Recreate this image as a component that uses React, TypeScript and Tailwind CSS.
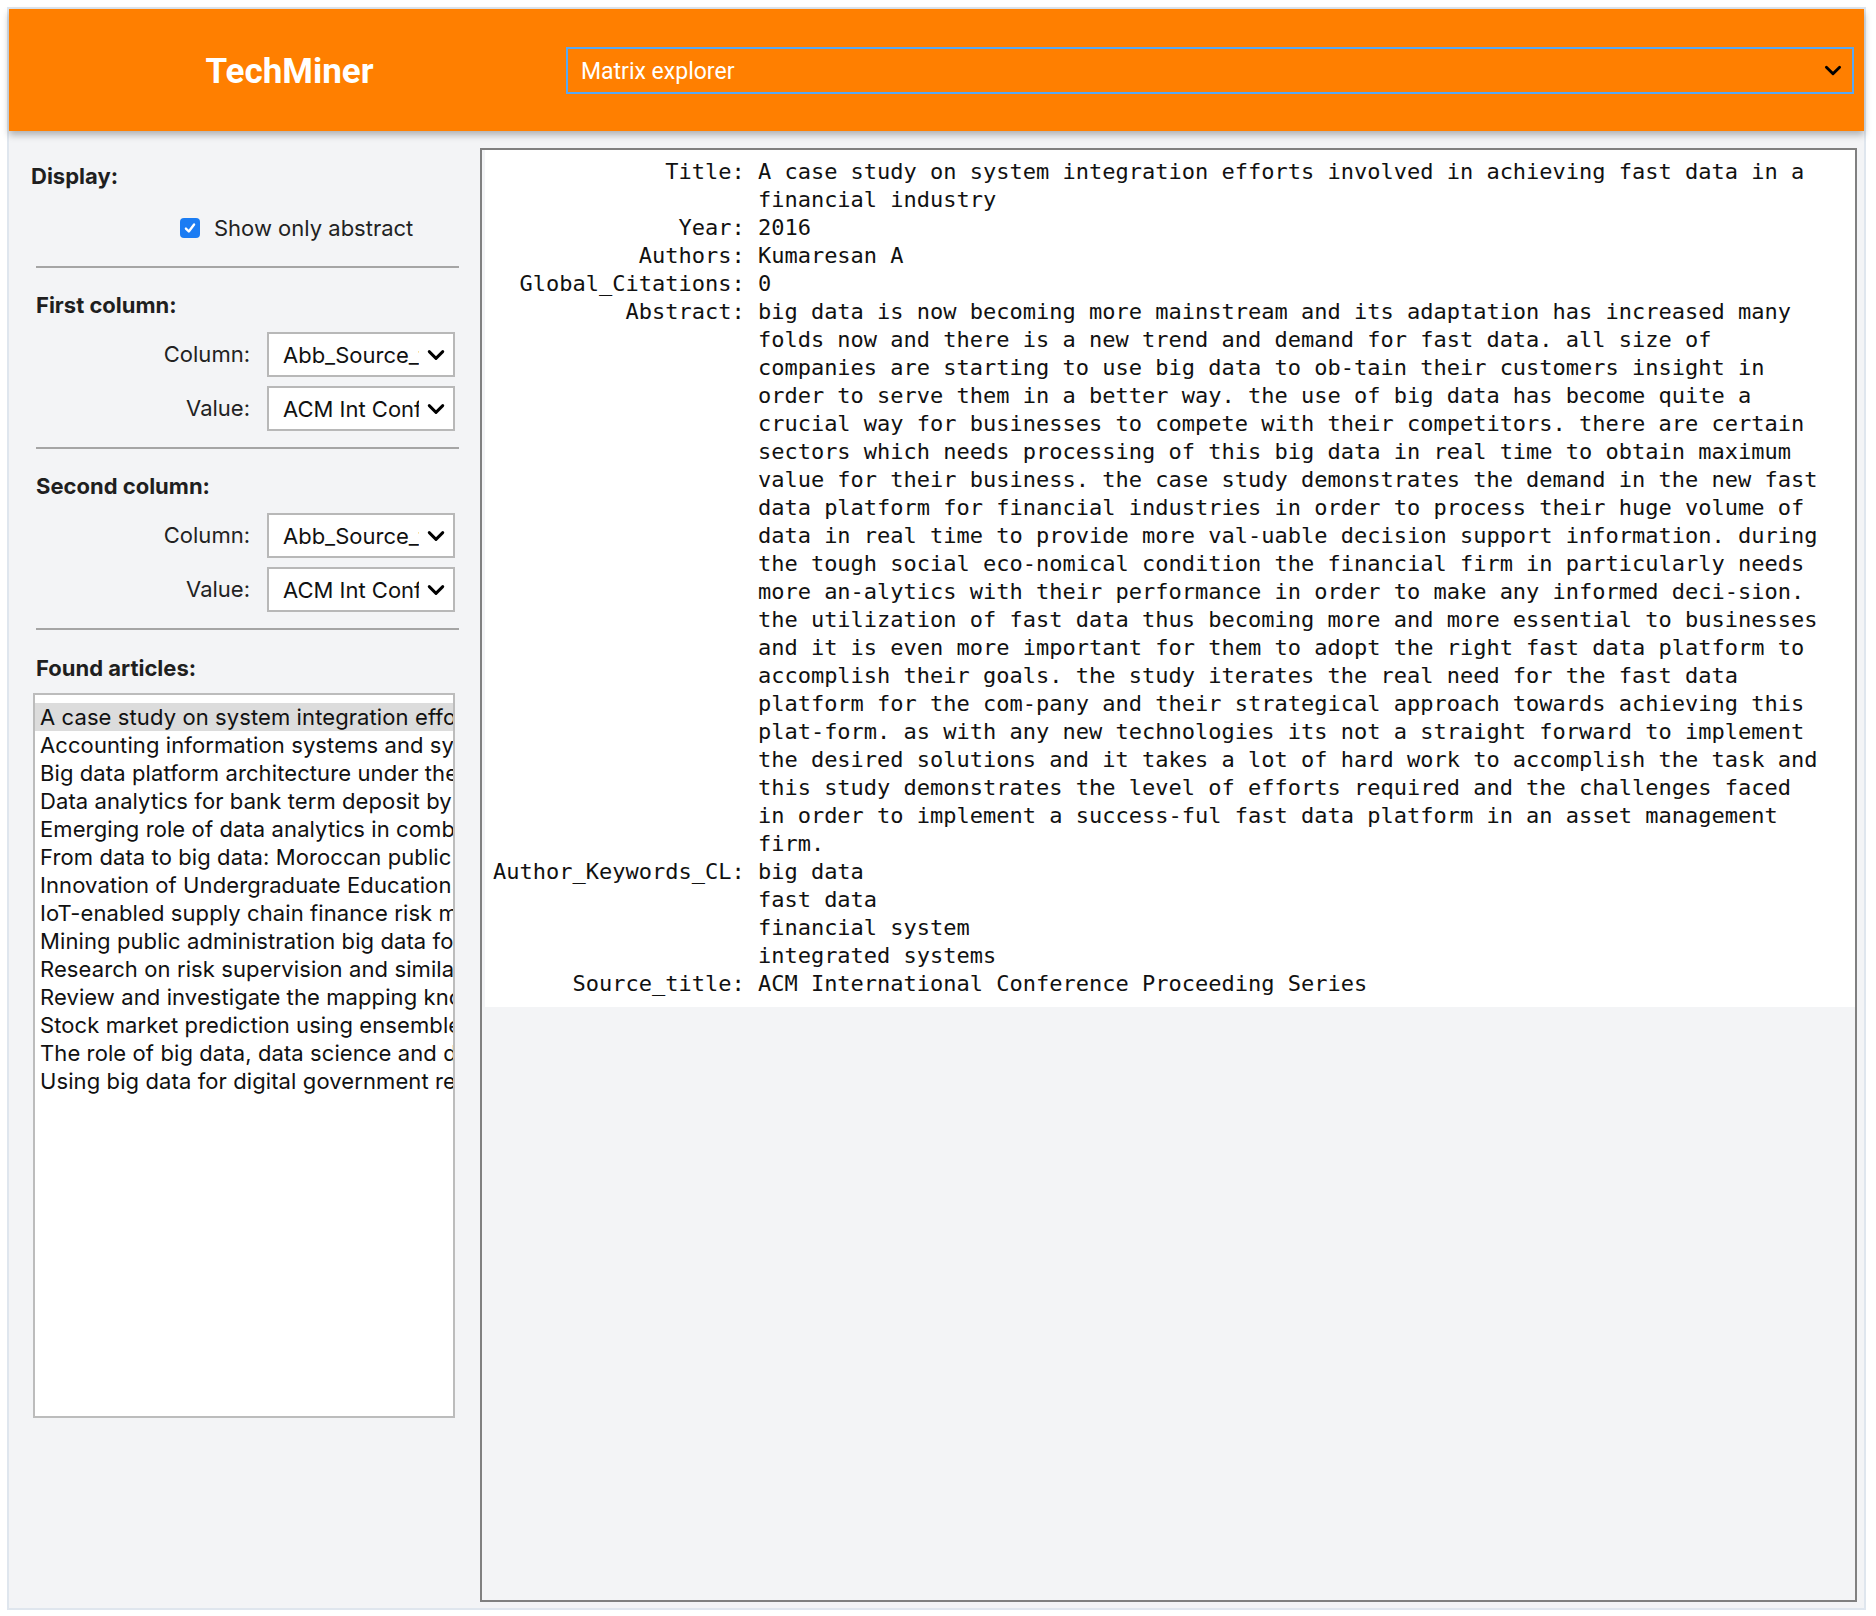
import React from 'react';

const articles = [
  'A case study on system integration efforts involved in achieving fast data in a financial industry',
  'Accounting information systems and systems thinking',
  'Big data platform architecture under the background of financial technology',
  'Data analytics for bank term deposit by using machine learning',
  'Emerging role of data analytics in combating financial crime',
  'From data to big data: Moroccan public sector',
  'Innovation of Undergraduate Education in Finance',
  'IoT-enabled supply chain finance risk management',
  'Mining public administration big data for financial risk',
  'Research on risk supervision and similarity analysis',
  'Review and investigate the mapping knowledge domain',
  'Stock market prediction using ensemble learning',
  'The role of big data, data science and data analytics',
  'Using big data for digital government research',
];

const record: [string, string[]][] = [
  ['Title:', ['A case study on system integration efforts involved in achieving fast data in a', 'financial industry']],
  ['Year:', ['2016']],
  ['Authors:', ['Kumaresan A']],
  ['Global_Citations:', ['0']],
  [
    'Abstract:',
    [
      'big data is now becoming more mainstream and its adaptation has increased many',
      'folds now and there is a new trend and demand for fast data. all size of',
      'companies are starting to use big data to ob-tain their customers insight in',
      'order to serve them in a better way. the use of big data has become quite a',
      'crucial way for businesses to compete with their competitors. there are certain',
      'sectors which needs processing of this big data in real time to obtain maximum',
      'value for their business. the case study demonstrates the demand in the new fast',
      'data platform for financial industries in order to process their huge volume of',
      'data in real time to provide more val-uable decision support information. during',
      'the tough social eco-nomical condition the financial firm in particularly needs',
      'more an-alytics with their performance in order to make any informed deci-sion.',
      'the utilization of fast data thus becoming more and more essential to businesses',
      'and it is even more important for them to adopt the right fast data platform to',
      'accomplish their goals. the study iterates the real need for the fast data',
      'platform for the com-pany and their strategical approach towards achieving this',
      'plat-form. as with any new technologies its not a straight forward to implement',
      'the desired solutions and it takes a lot of hard work to accomplish the task and',
      'this study demonstrates the level of efforts required and the challenges faced',
      'in order to implement a success-ful fast data platform in an asset management',
      'firm.',
    ],
  ],
  ['Author_Keywords_CL:', ['big data', 'fast data', 'financial system', 'integrated systems']],
  ['Source_title:', ['ACM International Conference Proceeding Series']],
];

const recordText = record
  .flatMap(([label, lines]) =>
    lines.map((line, i) => (i === 0 ? label.padStart(19) : ''.padStart(19)) + ' ' + line)
  )
  .join('\n');

function Chevron({ className = '' }: { className?: string }) {
  return (
    <svg viewBox="0 0 16 10" className={className} fill="none" stroke="currentColor" strokeWidth="2.6" strokeLinecap="round" strokeLinejoin="round">
      <polyline points="2,2 8,8 14,2" />
    </svg>
  );
}

function Select({ value }: { value: string }) {
  return (
    <div className="flex h-[45px] w-[188px] items-center border-2 border-[#b8b8b8] bg-white pl-[14px] pr-[8px]">
      <span className="w-[136px] overflow-hidden whitespace-nowrap text-[22px] leading-[26px] text-[#111]">{value}</span>
      <Chevron className="ml-[8px] h-[12px] w-[18px] text-black" />
    </div>
  );
}

function FieldRow({ label, value, className = '' }: { label: string; value: string; className?: string }) {
  return (
    <div className={`flex items-center ${className}`}>
      <span className="w-[241px] text-right text-[22px] text-[#222]">{label}</span>
      <div className="ml-[17px]">
        <Select value={value} />
      </div>
    </div>
  );
}

function Divider({ className = '' }: { className?: string }) {
  return <div className={`ml-[27px] h-[2px] w-[423px] bg-[#a5a5a5] ${className}`} />;
}

export default function App() {
  return (
    <div className="h-[1616px] w-[1876px] bg-white pl-[7px] pt-[7px] font-['Inter',sans-serif]">
      <div className="flex h-[1603px] w-[1859px] flex-col border-2 border-[#dfe6ee] bg-[#f3f4f6]">
        {/* Header */}
        <div className="relative z-10 flex h-[122px] shrink-0 items-center bg-[#ff7f00] shadow-[0_4px_7px_rgba(0,0,0,0.28)]">
          <div className="w-[557px] pl-[4px] pt-[4px] text-center font-['Roboto',sans-serif] text-[35px] font-bold text-white">TechMiner</div>
          <div className="flex h-[47px] w-[1288px] items-center justify-between border-2 border-[#58a8f2] pl-[13px] pr-[10px] font-['Roboto',sans-serif] text-[23px] text-white">
            <span className="pt-[4px]">Matrix explorer</span>
            <Chevron className="h-[11px] w-[18px] text-black" />
          </div>
        </div>

        <div className="flex flex-1">
          {/* Sidebar */}
          <div className="w-[471px] shrink-0 pt-[32px]">
            <div className="pl-[22px] text-[22px] font-bold leading-[26px] text-[#1f1f1f]">Display:</div>
            <div className="mt-[26px] flex h-[26px] items-center pl-[171px]">
              <div className="flex h-[20px] w-[20px] items-center justify-center rounded-[4px] bg-[#1b7cf3]">
                <svg viewBox="0 0 12 12" className="h-[14px] w-[14px]" fill="none" stroke="white" strokeWidth="2" strokeLinecap="round" strokeLinejoin="round">
                  <polyline points="2.5,6.5 5,9 9.5,3" />
                </svg>
              </div>
              <span className="ml-[14px] text-[22px] text-[#222]">Show only abstract</span>
            </div>
            <Divider className="mt-[25px]" />

            <div className="mt-[24px] pl-[27px] text-[22px] font-bold leading-[26px] text-[#1f1f1f]">First column:</div>
            <FieldRow className="mt-[14px]" label="Column:" value="Abb_Source_title" />
            <FieldRow className="mt-[9px]" label="Value:" value="ACM Int Conference Proceeding Series" />
            <Divider className="mt-[16px]" />

            <div className="mt-[24px] pl-[27px] text-[22px] font-bold leading-[26px] text-[#1f1f1f]">Second column:</div>
            <FieldRow className="mt-[14px]" label="Column:" value="Abb_Source_title" />
            <FieldRow className="mt-[9px]" label="Value:" value="ACM Int Conference Proceeding Series" />
            <Divider className="mt-[16px]" />

            <div className="mt-[25px] pl-[27px] text-[22px] font-bold leading-[26px] text-[#1f1f1f]">Found articles:</div>
            <div className="ml-[24px] mt-[12px] h-[725px] w-[422px] overflow-hidden border-2 border-[#bcbcbc] bg-white pt-[8px]">
              {articles.map((a, i) => (
                <div
                  key={a}
                  className={`h-[28px] whitespace-nowrap pl-[5px] text-[22px] leading-[28px] tracking-[0.1px] text-[#111] ${i === 0 ? 'bg-[#dcdcdc]' : ''}`}
                >
                  {a}
                </div>
              ))}
            </div>
          </div>

          {/* Record panel */}
          <div className="mt-[17px] h-[1454px] w-[1377px] border-2 border-[#808080] bg-[#f3f4f6]">
            <pre className="ml-[3px] bg-white pb-[9px] pl-[8px] pt-[8px] font-['DejaVu_Sans_Mono',monospace] text-[22px] leading-[28px] text-[#111]">
              {recordText}
            </pre>
          </div>
        </div>
      </div>
    </div>
  );
}
